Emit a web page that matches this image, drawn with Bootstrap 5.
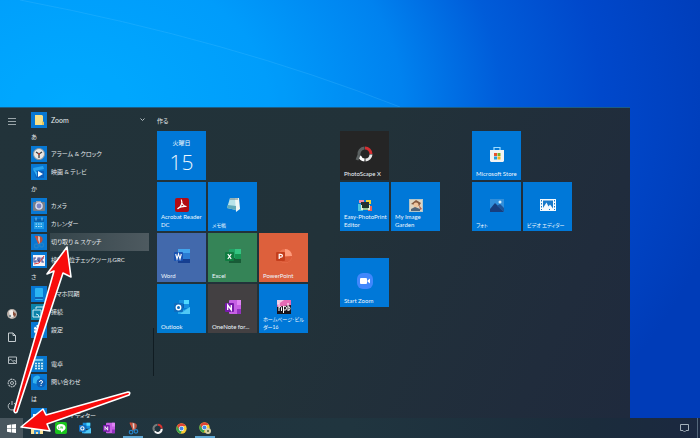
<!DOCTYPE html>
<html lang="ja">
<head>
<meta charset="utf-8">
<meta name="viewport" content="width=device-width, initial-scale=1">
<title>スタート メニュー</title>
<link href="https://cdn.jsdelivr.net/npm/bootstrap@5.3.0/dist/css/bootstrap.min.css" rel="stylesheet">
<style>
body{font-family:Lato,"Noto Sans CJK JP",sans-serif;font-size:6px;line-height:8px;color:#e6ebee;font-feature-settings:"palt";
 background:radial-gradient(ellipse 95% 110% at 10% 24%,#00aaff 0%,#009cfb 30%,#0082ef 50%,#005cd9 65%,#0048cb 80%,#003cb8 100%)}
a,button{color:inherit;text-decoration:none}
button{background:none;border:0;padding:0}
svg{display:block;flex:none}
.beam{left:0;top:0;width:100%;height:107px}
.desk{min-height:0;padding-top:107px}
.start-menu{width:90%;background:linear-gradient(115deg,#22333a 0%,#223239 50%,#202c3c 85%,#1f2a3d 100%);border-top:1px solid #1b5c85}
.rail{width:24px;padding:7px 0 6px}
.rail button{height:12px}
.rail-low{gap:11px}
.apps{width:122px;margin-left:7px;padding-top:3px}
.app-row{height:18px;gap:3px;padding-right:8px}
.app-row.active{padding-right:0;margin-right:4px}
.app-row.active .app-name{background:linear-gradient(90deg,#34444a,#4e5a60);height:18px;line-height:18px}
.app-icon{width:16px;height:16px;background:#0878d3}
.app-name{flex:1;white-space:nowrap;padding-left:1px}
.latin{font-size:7px}
.letter{height:16px;line-height:16px}
.thumb{width:1px;height:48px;background:#101c22;margin-top:220px}
.board{padding:9px 0 0 3px}
.board h2{font-size:6px;font-weight:400;line-height:8px;margin:0 0 6px;height:8px}
.tiles{display:grid;grid-auto-columns:49px;grid-auto-rows:49px;gap:2px}
.g-first{width:151px;margin-right:32px}
.g-mid{width:100px;margin-right:32px}
.tile{background:#0078d8;padding:15px 0 2px 4px;line-height:8px;color:#eef7fe;display:flex;flex-direction:column;white-space:nowrap}
.tile svg{align-self:center;margin-right:4px}
.tile span{margin-top:auto}
.tile .kana{font-size:5px}
.r2{grid-row:2}.r3{grid-row:3}.r4{grid-row:4}
.c1{grid-column:1}.c2{grid-column:2}.c3{grid-column:3}
.row-gap{margin-top:27px}
.cal{padding:8px 0 0;text-align:center;font-size:6px}
.cal b{font:300 21px/24px "Open Sans",sans-serif;margin-top:3px}
.word{background:#4269ac}.excel{background:#358457}.ppt{background:#dd603c}.onenote{background:#434042}.scape{background:#252525}.outlook{background:#007bd2}
.taskbar{height:20px;background:linear-gradient(90deg,#21343e,#20353f 50%,#1b2c3c 85%,#1b2840)}
.taskbar button{width:24px;height:20px;display:flex;align-items:center;justify-content:center}
.taskbar .win{width:23px;background:#48565e;margin-right:2px}
.taskbar .on{border-bottom:2px solid #5fa6d2;width:20px;margin:0 2px;padding-top:2px}
.peek{width:1px;height:20px;background:#54677a;margin:0 2px 0 1px}
.arrows{left:0;bottom:0;width:170px;height:200px;pointer-events:none}
</style>
<script src="https://cdn.jsdelivr.net/npm/bootstrap@5.3.0/dist/js/bootstrap.bundle.min.js"></script>
</head>
<body class="vh-100 overflow-hidden position-relative d-flex flex-column">
<svg width="0" height="0" class="position-absolute" aria-hidden="true">
<defs>
<symbol id="i-outlook" viewBox="0 0 16 16"><path d="M5 1h10v8H5z" fill="#1490df"/><path d="M10 1h5v4h-5z" fill="#50d9ff"/><path d="M5 5h5v4H5z" fill="#0a5fb0"/><path d="M4 8l6 3 6-3v7H4z" fill="#28a8ea"/><path d="M16 8v7H6z" fill="#50c8f5"/><rect y="4" width="9" height="9" rx="1" fill="#0f6cbd"/><circle cx="4.500" cy="8.500" r="2.200" fill="none" stroke="#fff" stroke-width="1.400"/></symbol>
<symbol id="i-onenote" viewBox="0 0 16 16"><rect x="4" y="1" width="12" height="14" rx="1" fill="#c660e4"/><path d="M12 1h4v5h-4z" fill="#e084f4"/><path d="M12 10h4v5h-4z" fill="#9332bf"/><rect y="4" width="9" height="9" rx="1" fill="#7719aa"/><path d="M2.700 11V6l3.600 5V6" fill="none" stroke="#fff" stroke-width="1.300"/></symbol>
<symbol id="i-snip" viewBox="0 0 16 16"><path d="M3 1q7-1 9 2 1 4-3 7l-2-1z" fill="#b9503f"/><path d="M7 1l2 1v8H7z" fill="#d9d3d2"/><path d="M4 1l4 9" stroke="#d2503a" stroke-width="1.500" fill="none"/><circle cx="5" cy="12.500" r="2.200" fill="none" stroke="#2482c8" stroke-width="1.500"/><circle cx="11" cy="11.500" r="2.200" fill="none" stroke="#2482c8" stroke-width="1.500"/></symbol>
<symbol id="i-ring" viewBox="0 0 16 16"><g fill="none" stroke-width="3"><path d="M8.500 2.500A5.500 5.500 0 0 1 14 8" stroke="#d9322f"/><path d="M14 8.500A5.500 5.500 0 0 1 4 12" stroke="#f3f3f3"/><path d="M3.500 11.500A5.500 5.500 0 0 1 8 2.500" stroke="#777c7c"/></g></symbol>
<symbol id="i-chrome" viewBox="0 0 16 16"><circle cx="8" cy="8" r="7.500" fill="#f9cb35"/><path d="M1.500 4.300A7.500 7.500 0 0 1 14.500 4.300H8L4.800 9.800z" fill="#e04437"/><path d="M1.500 4.300L4.800 10 8 11.500l-1 4A7.500 7.500 0 0 1 1.500 4.300" fill="#38a351"/><circle cx="8" cy="8" r="3.700" fill="#fff"/><circle cx="8" cy="8" r="2.900" fill="#4285e8"/></symbol>
</defs></svg>
<svg class="beam position-absolute" viewBox="0 0 700 107" preserveAspectRatio="none" aria-hidden="true"><path d="M20 0Q230 40 400 107" fill="none" stroke="#55c3ff" stroke-opacity=".25"/><path d="M20 0Q230 40 400 107H0V0z" fill="#00b4ff" fill-opacity=".08"/></svg>

<main class="desk flex-grow-1 d-flex position-relative">
<section class="start-menu d-flex overflow-hidden" aria-label="スタート">
 <nav class="rail d-flex flex-column align-items-center justify-content-between" aria-label="システム">
  <button type="button" aria-label="展開"><svg width="8" height="8" stroke="#9aa5a9" stroke-width="1"><path d="M0 1.500h8M0 4.500h8M0 7.500h8"/></svg></button>
  <div class="rail-low d-flex flex-column align-items-center">
   <button type="button" aria-label="アカウント"><svg width="10" height="12" viewBox="0 0 10 12"><circle cx="5" cy="6" r="5" fill="#bdb3ac"/><path d="M2 3q4-3 6 2l-2 4-3 1z" fill="#f4eeea"/><path d="M6 3l3 3-1 3-2-2z" fill="#884f3b"/><circle cx="3" cy="8" r="1.200" fill="#7b8b91"/></svg></button>
   <button type="button" aria-label="ドキュメント"><svg width="8" height="12" viewBox="0 0 8 12" fill="none" stroke="#c3cbce"><path d="M.5 2h4.500l2.500 2.500V10.500H.5zM5 2v2.500h2.500"/></svg></button>
   <button type="button" aria-label="ピクチャ"><svg width="9" height="12" viewBox="0 0 9 12" fill="none" stroke="#b3bcc0"><path d="M.5 3h8v6.500h-8zM.5 7l2-2 4 4M5.500 7l1-1 2 2"/></svg></button>
   <button type="button" aria-label="設定"><svg width="10" height="12" viewBox="0 0 10 12" fill="none" stroke="#b3bcc0"><circle cx="5" cy="6" r="3.800" stroke-width="1.200" stroke-dasharray="2 .6"/><circle cx="5" cy="6" r="1.500"/></svg></button>
   <button type="button" aria-label="電源"><svg width="10" height="12" viewBox="0 0 10 12" fill="none" stroke="#b3bcc0"><path d="M3 3a3.800 3.800 0 1 0 4 0M5 1v4"/></svg></button>
  </div>
 </nav>
 <nav class="apps overflow-hidden" aria-label="アプリ">
  <a href="#" class="app-row d-flex align-items-center"><svg class="app-icon" viewBox="0 0 16 16"><path d="M4 3h7l1 1v9H4z" fill="#f7df86"/><path d="M11 9l2 1v3h-2z" fill="#e2c45e"/></svg><span class="app-name latin">Zoom</span><svg width="5" height="4" fill="none" stroke="#b3bcc0"><path d="M.5.5l2 2 2-2"/></svg></a>
  <div class="letter">あ</div>
  <a href="#" class="app-row d-flex align-items-center"><svg class="app-icon" viewBox="0 0 16 16"><circle cx="8" cy="8" r="5.500" fill="#e9e7e4" stroke="#8f9499"/><path d="M5 6l3 2 3-2M8 8v4" stroke="#363b40" stroke-width="1.300" fill="none"/><circle cx="8" cy="8" r="1" fill="#c34434"/></svg><span class="app-name">アラーム &amp; クロック</span></a>
  <a href="#" class="app-row d-flex align-items-center"><svg class="app-icon" viewBox="0 0 16 16"><path d="M2 4l10-2 1 3L3 7z" fill="#2aa3ee"/><path d="M3 7h10v7H5z" fill="#0e5fba"/><path d="M2 5l4 3v5z" fill="#35b1f3"/><path d="M7 7l5 3-5 3z" fill="#fff"/></svg><span class="app-name">映画 &amp; テレビ</span></a>
  <div class="letter">か</div>
  <a href="#" class="app-row d-flex align-items-center"><svg class="app-icon" viewBox="0 0 16 16"><rect x="2" y="4" width="12" height="9" rx="1" fill="#777f8c"/><path d="M5 3h5v2H5z" fill="#9ba3ae"/><circle cx="8" cy="8" r="3.800" fill="#d9dcf0"/><circle cx="8" cy="8" r="2.400" fill="#7984c4"/></svg><span class="app-name">カメラ</span></a>
  <a href="#" class="app-row d-flex align-items-center"><svg class="app-icon" viewBox="0 0 16 16"><path d="M3 3h10v10H3z" fill="#1f9be5"/><path d="M3 3h10v3H3z" fill="#0860ad"/><path d="M5 1.500v3M11 1.500v3" stroke="#72c5f6"/><path d="M4.500 8h7M4.500 10.500h7" stroke="#b4e3ff" stroke-dasharray="1.500 1"/></svg><span class="app-name">カレンダー</span></a>
  <a href="#" class="app-row active d-flex align-items-center"><svg class="app-icon" viewBox="0 0 16 16"><use href="#i-snip" x="1" y="1" width="14" height="14"/></svg><span class="app-name">切り取り &amp; スケッチ</span></a>
  <a href="#" class="app-row d-flex align-items-center"><svg class="app-icon" viewBox="0 0 16 16"><path d="M2 3h12v11H2z" fill="#f6f3f6"/><path d="M5 6H3v4h2V8M7 10V6h2v2H7l2 2M13 6h-2v4h2" stroke="#3e4694" stroke-width="1.100" fill="none"/><path d="M3 12l5-1 5-7" stroke="#df4145" fill="none"/></svg><span class="app-name">検索順位チェックツールGRC</span></a>
  <div class="letter">さ</div>
  <a href="#" class="app-row d-flex align-items-center"><svg class="app-icon" viewBox="0 0 16 16"><rect x="4" y="2" width="8" height="12" rx="1" fill="#2bb4f4"/><path d="M4 11h8v2H4z" fill="#1363b4"/></svg><span class="app-name">スマホ同期</span></a>
  <a href="#" class="app-row d-flex align-items-center"><svg class="app-icon" viewBox="0 0 16 16"><path fill="#0b83a9" d="M0 0h16v16H0z"/><path d="M5 5V3h8v6h-2M2 6h8v7H2zM5 10a3 3 0 0 1 3 3" fill="none" stroke="#cfedf5"/></svg><span class="app-name">接続</span></a>
  <a href="#" class="app-row d-flex align-items-center"><svg class="app-icon" viewBox="0 0 16 16"><circle cx="8" cy="8" r="4" fill="none" stroke="#fff" stroke-width="2.500" stroke-dasharray="2.200 1"/><circle cx="8" cy="8" r="3" fill="none" stroke="#fff"/></svg><span class="app-name">設定</span></a>
  <div class="letter"></div>
  <a href="#" class="app-row d-flex align-items-center"><svg class="app-icon" viewBox="0 0 16 16"><path d="M3 2h10v12H3z" fill="#1682c7"/><path d="M4 3h8v2H4z" fill="#73c8f1"/><path d="M4 7.500h8M4 10h8M4 12.500h8" stroke="#d3edf8" stroke-width="1.500" stroke-dasharray="2 1"/></svg><span class="app-name">電卓</span></a>
  <a href="#" class="app-row d-flex align-items-center"><svg class="app-icon" viewBox="0 0 16 16"><path d="M2 9V6a4 4 0 0 1 7-3v3H6v4z" fill="#32b2f0"/><circle cx="10" cy="9" r="4.500" fill="#0f5fb4"/><path d="M8.500 8q0-1.500 1.500-1.500T11.500 8q0 1-1.500 1.500v.7M10 11v1" stroke="#fff" fill="none"/></svg><span class="app-name">問い合わせ</span></a>
  <div class="letter">は</div>
  <a href="#" class="app-row d-flex align-items-center"><svg class="app-icon" viewBox="0 0 16 16"><path d="M2 6h12v8H2z" fill="#eef6fb"/></svg><span class="app-name">ビデオ エディター</span></a>
 </nav>
 <div class="thumb"></div>
 <div class="board flex-grow-1">
  <h2>作る</h2>
  <div class="d-flex align-items-start">
   <div class="tiles g-first">
    <a href="#" class="tile cal c1"><div>火曜日</div><b>15</b></a>
    <a href="#" class="tile r2 c1"><svg width="16" height="16" viewBox="0 0 16 16"><rect x="1" y="1" width="14" height="14" rx="2" fill="#b30b13"/><path d="M3.500 12c1-2 6-3 9-2.500-3 0-5-3-5-6 1.500 2-1 7-4 8.500" fill="none" stroke="#fff" stroke-width="1.200"/></svg><span>Acrobat Reader<br>DC</span></a>
    <a href="#" class="tile r2 c2"><svg width="16" height="16" viewBox="0 0 16 16"><path d="M5 1h8l-2 12-9-2z" fill="#b7e3e9"/><path d="M10 1h4l1 11-4 3z" fill="#eef7f5"/><path d="M3 8l8 1v4l-9-2z" fill="#5fa9b9"/><path d="M5 2h8" stroke="#6b7f83"/></svg><span class="kana">メモ帳</span></a>
    <a href="#" class="tile word r3 c1"><svg width="16" height="16" viewBox="0 0 16 16"><rect x="4" y="1" width="12" height="14" rx="1" fill="#2b7cd3"/><path d="M4 1h12v4H4z" fill="#42a5ee"/><path d="M4 11h12v4H4z" fill="#163f91"/><rect y="4" width="9" height="9" rx="1" fill="#1953b2"/><path d="M1.700 6l1.300 5 1.500-5L6 11l1.300-5" fill="none" stroke="#fff" stroke-width="1.100"/></svg><span>Word</span></a>
    <a href="#" class="tile excel r3 c2"><svg width="16" height="16" viewBox="0 0 16 16"><rect x="4" y="1" width="12" height="14" rx="1" fill="#21a366"/><path d="M10 1h6v5h-6z" fill="#33c481"/><path d="M4 10h12v5H4z" fill="#185c37"/><path d="M10 6h6v5h-6z" fill="#169451"/><rect y="4" width="9" height="9" rx="1" fill="#107c41"/><path d="M2.800 6l3.400 5M6.200 6l-3.400 5" stroke="#fff" stroke-width="1.200"/></svg><span>Excel</span></a>
    <a href="#" class="tile ppt r3 c3"><svg width="16" height="16" viewBox="0 0 16 16"><circle cx="9" cy="8" r="7" fill="#ed7552"/><path d="M9 1a7 7 0 0 1 7 7H9z" fill="#ff9b7b"/><path d="M2.500 10L16 8a7 7 0 0 1-13.500 2" fill="#dc5b38"/><rect y="4" width="9" height="9" rx="1" fill="#c43e1c"/><path d="M3.200 11V6.300h1.500q1.700 0 1.700 1.400T4.700 9.200H3.200" fill="none" stroke="#fff" stroke-width="1.200"/></svg><span>PowerPoint</span></a>
    <a href="#" class="tile outlook r4 c1"><svg width="16" height="16"><use href="#i-outlook"/></svg><span>Outlook</span></a>
    <a href="#" class="tile onenote r4 c2"><svg width="16" height="16"><use href="#i-onenote"/></svg><span>OneNote for...</span></a>
    <a href="#" class="tile r4 c3"><svg width="16" height="16" viewBox="0 0 16 16"><rect x="1" y="1" width="14" height="14" fill="#17131a"/><path d="M1 1h14v5L1 8z" fill="#e66bb5"/><path d="M1 1h7L1 6z" fill="#efcde5"/><path d="M3 4v8M3 8.500q2-2 2.500 0V12M7.500 7v7M7.500 8q3-1.500 3 1.200t-3 1.800M12 4v8M12 8q2-1 2 1.500T12 11" fill="none" stroke="#fff"/></svg><span class="kana">ホームページ･ビル<br>ダー16</span></a>
   </div>
   <div class="g-mid">
    <div class="tiles">
     <a href="#" class="tile scape c1"><svg width="20" height="16" viewBox="0 0 20 16"><g fill="none" stroke-width="3"><path d="M10 2A6 6 0 0 1 16 8" stroke="#d42e31"/><path d="M16 8.500A6 6 0 0 1 10.500 14" stroke="#e8e8e8"/><path d="M9.500 14A6 6 0 0 1 4.500 10" stroke="#fff"/><path d="M4 9A6 6 0 0 1 9.500 2M4 9L2 14" stroke="#5c6262"/></g></svg><span>PhotoScape X</span></a>
     <a href="#" class="tile r2 c1"><svg width="14" height="16" viewBox="0 0 14 16"><path d="M1 3h5v3H1z" fill="#f08aa5"/><path d="M8 3h5v4H8z" fill="#efd33c"/><path d="M0 7h5v7H0z" fill="#49c3df"/><path d="M10 9h4v5h-4z" fill="#ef6257"/><path d="M3 5h8v4H3z" fill="#272d33"/><path d="M3 8h9v5H3z" fill="#e7ecdc"/><path d="M4 8h7v3H4z" fill="#1e342c"/><path d="M5 12h5" stroke="#4c9d57"/></svg><span>Easy-PhotoPrint<br>Editor</span></a>
     <a href="#" class="tile r2 c2"><svg width="14" height="16" viewBox="0 0 14 16"><path d="M0 2h14v13H0z" fill="#b3c5c9"/><path d="M1 3h12v11H1z" fill="#ddd5c3"/><path d="M2 7l5-4 5 3-2 3z" fill="#865b40"/><circle cx="7" cy="8" r="2.500" fill="#efc49c"/><path d="M2 12l4-2 5 2v2H2z" fill="#536679"/><path d="M10 8l3 4-2 1z" fill="#b35f4d"/></svg><span>My Image<br>Garden</span></a>
    </div>
    <div class="tiles row-gap">
     <a href="#" class="tile c1"><svg width="16" height="16" viewBox="0 0 16 16"><rect width="16" height="16" rx="6" fill="#4087fc"/><rect x="3" y="5" width="7" height="6" rx="1" fill="#fff"/><path d="M10.500 7.500L13 5.500v5l-2.500-2z" fill="#fff"/></svg><span>Start Zoom</span></a>
    </div>
   </div>
   <div class="tiles">
    <a href="#" class="tile c1"><svg width="16" height="16" viewBox="0 0 16 16"><path d="M5 6V1.500h6V6" fill="none" stroke="#9edcff" stroke-width="1.200"/><path d="M1 4h14v11l-1 1H2l-1-1z" fill="#f2f2f2"/><path d="M5 7h3v3H5z" fill="#e9512b"/><path d="M8.500 7h3v3h-3z" fill="#7aaf25"/><path d="M5 10.500h3v3H5z" fill="#249dd8"/><path d="M8.500 10.500h3v3h-3z" fill="#f3b41b"/></svg><span>Microsoft Store</span></a>
    <a href="#" class="tile r2 c1"><svg width="16" height="16" viewBox="0 0 16 16"><path d="M1 2h14v13H1z" fill="#318fdb"/><path d="M1 12l5-6 9 9H1z" fill="#173e7e"/><path d="M8 9l3-2 4 4v4z" fill="#1d559a"/><circle cx="11" cy="5" r="1.500" fill="#d5f0ff"/></svg><span class="kana">フォト</span></a>
    <a href="#" class="tile r2 c2"><svg width="16" height="16" viewBox="0 0 16 16"><path d="M0 2h16v12H0z" fill="#f4f9fd"/><path d="M1.500 3v10M14.500 3v10" stroke="#1678c5" stroke-dasharray="1.500 1.500"/><path d="M3 3.500h10v8l-3-4-1.500 2-2-4L3 11z" fill="#1879ca"/><path d="M9 12l1 1" stroke="#0078d8"/></svg><span class="kana">ビデオ エディター</span></a>
   </div>
  </div>
 </div>
</section>
</main>

<footer class="taskbar d-flex align-items-center flex-shrink-0">
 <button type="button" class="win" aria-label="スタート"><svg width="9" height="9" viewBox="0 0 9 9" fill="#fff"><path d="M0 1.200L4 .6v3.600H0zM4.600.5L9 0v4.200H4.600zM0 4.800h4v3.600L0 7.800zM4.600 4.800H9V9l-4.400-.6z"/></svg></button>
 <button type="button" aria-label="エクスプローラー"><svg width="12" height="11" viewBox="0 0 12 11"><path d="M0 1h5l1 1h6v9H0z" fill="#f5cf58"/><path d="M0 4h12v7H0z" fill="#fbe297"/><path d="M3 7h6v4H7V9H5v2H3z" fill="#3690d6"/></svg></button>
 <button type="button" aria-label="LINE"><svg width="12" height="12" viewBox="0 0 12 12"><rect width="12" height="12" rx="2" fill="#19c51e"/><path d="M6 2c5 0 5.500 4.500 3.500 6L6 10.500v-2C0 8.500 0 2 6 2" fill="#fff"/><path d="M3.500 4.500v2h1M5.500 4.500v2M6.500 6.500v-2l1 2v-2" fill="none" stroke="#19c51e" stroke-width=".5"/></svg></button>
 <button type="button" aria-label="Outlook"><svg width="12" height="12"><use href="#i-outlook"/></svg></button>
 <button type="button" aria-label="OneNote"><svg width="12" height="12"><use href="#i-onenote"/></svg></button>
 <button type="button" class="on" aria-label="切り取り &amp; スケッチ"><svg width="13" height="13"><use href="#i-snip"/></svg></button>
 <button type="button" aria-label="PhotoScape X"><svg width="11" height="11"><use href="#i-ring"/></svg></button>
 <button type="button" aria-label="Chrome"><svg width="11" height="11"><use href="#i-chrome"/></svg></button>
 <button type="button" class="on" aria-label="Chrome ウィンドウ"><svg width="12" height="12" viewBox="0 0 12 12"><use href="#i-chrome" width="11" height="11"/><circle cx="9" cy="9" r="3" fill="#d8d0a8"/><path d="M8 8h2v2H8z" fill="#6a7551"/></svg></button>
 <button type="button" class="ms-auto" aria-label="通知"><svg width="9" height="9" viewBox="0 0 9 9" fill="none" stroke="#a4b0ba"><path d="M.5.500h8v6H6L4.500 8 3 6.500H.5z"/></svg></button>
 <span class="peek"></span>
</footer>

<svg class="arrows position-absolute" viewBox="0 0 170 200" aria-hidden="true"><g fill="#f80c0c" stroke="#fff" stroke-width="1.600" stroke-linejoin="round"><path d="M14 173L54 33 47 36 67 9 71 39 63 35 17 174Q15 176 14 173z"/><path d="M128 154L46 177 43 171 21 189 50 193 47 186 129 157Q131 154 128 154z"/></g></svg>
</body>
</html>
